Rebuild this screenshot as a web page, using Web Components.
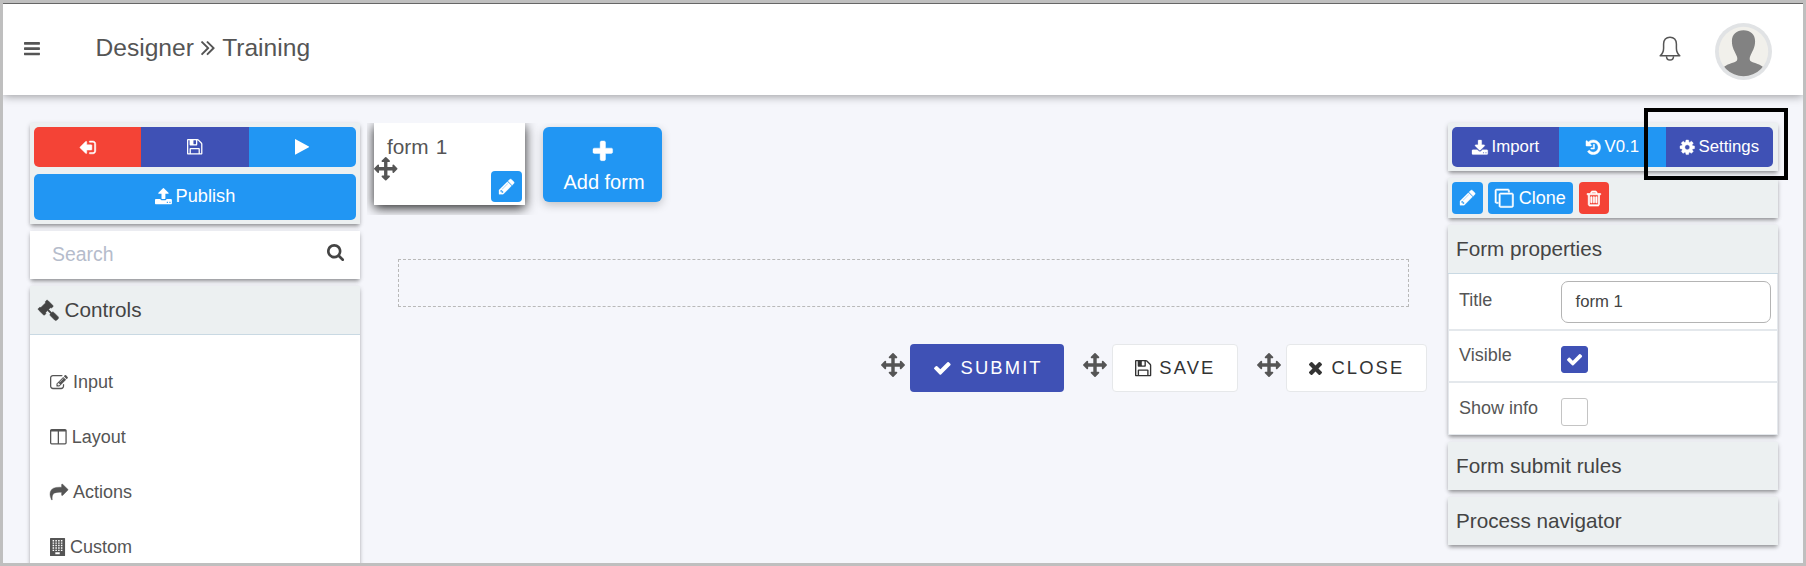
<!DOCTYPE html>
<html lang="en">
<head>
<meta charset="utf-8">
<title>Designer</title>
<style>
html,body{margin:0;height:100%;overflow:hidden}
body{font-family:"Liberation Sans",Arial,sans-serif;color:#555;background:#bfbfbf}
</style>
</head>
<body>
<designer-app></designer-app>
<script>
const ICONS={
bars:['128 256 1536 1280','M1664 1344v128q0 26-19 45t-45 19h-1408q-26 0-45-19t-19-45v-128q0-26 19-45t45-19h1408q26 0 45 19t19 45zm0-512v128q0 26-19 45t-45 19h-1408q-26 0-45-19t-19-45v-128q0-26 19-45t45-19h1408q26 0 45 19t19 45zm0-512v128q0 26-19 45t-45 19h-1408q-26 0-45-19t-19-45v-128q0-26 19-45t45-19h1408q26 0 45 19t19 45z'],
chevrons:['397 461 966 998','M979 960q0 13-10 23l-466 466q-10 10-23 10t-23-10l-50-50q-10-10-10-23t10-23l393-393-393-393q-10-10-10-23t10-23l50-50q10-10 23-10t23 10l466 466q10 10 10 23zm384 0q0 13-10 23l-466 466q-10 10-23 10t-23-10l-50-50q-10-10-10-23t10-23l393-393-393-393q-10-10-10-23t10-23l50-50q10-10 23-10t23 10l466 466q10 10 10 23z'],
exit:['64 256 1568 1280','M704 1440q0 4 1 20t.5 26.5-3 23.5-10 19.5-20.5 6.5h-320q-119 0-203.5-84.5t-84.5-203.5v-704q0-119 84.5-203.5t203.5-84.5h320q13 0 22.5 9.5t9.5 22.5q0 4 1 20t.5 26.5-3 23.5-10 19.5-20.5 6.5h-320q-66 0-113 47t-47 113v704q0 66 47 113t113 47h312l11.5 1 11.5 3 8 5.5 7 9 2 13.5zm928-544q0 26-19 45l-544 544q-19 19-45 19t-45-19-19-45v-288h-448q-26 0-45-19t-19-45v-384q0-26 19-45t45-19h448v-288q0-26 19-45t45-19 45 19l544 544q19 19 19 45z',50],
play:['192 114 1407 1564','M1576 927l-1328 738q-23 13-39.5 3t-16.5-36v-1472q0-26 16.5-36t39.5 3l1328 738q23 13 23 31t-23 31z'],
floppy:['128 128 1536 1536','M512 1536h768v-384h-768v384zm896 0h128v-896q0-14-10-38.5t-20-34.5l-281-281q-10-10-34-20t-39-10v416q0 40-28 68t-68 28h-576q-40 0-68-28t-28-68v-416h-128v1280h128v-416q0-40 28-68t68-28h832q40 0 68 28t28 68v416zm-384-928v-320q0-13-9.5-22.5t-22.5-9.5h-192q-13 0-22.5 9.5t-9.5 22.5v320q0 13 9.5 22.5t22.5 9.5h192q13 0 22.5-9.5t9.5-22.5zm640 32v928q0 40-28 68t-68 28h-1344q-40 0-68-28t-28-68v-1344q0-40 28-68t68-28h928q40 0 88 20t76 48l280 280q28 28 48 76t20 88z'],
upload:['64 64 1664 1600','M1344 1472q0-26-19-45t-45-19-45 19-19 45 19 45 45 19 45-19 19-45zm256 0q0-26-19-45t-45-19-45 19-19 45 19 45 45 19 45-19 19-45zm128-224v320q0 40-28 68t-68 28h-1472q-40 0-68-28t-28-68v-320q0-40 28-68t68-28h427q21 56 70.5 92t110.5 36h256q61 0 110.5-36t70.5-92h427q40 0 68 28t28 68zm-325-648q-17 40-59 40h-256v448q0 26-19 45t-45 19h-256q-26 0-45-19t-19-45v-448h-256q-42 0-59-40-17-39 14-69l448-448q18-19 45-19t45 19l448 448q31 30 14 69z'],
download:['64 0 1664 1536','M1344 1344q0-26-19-45t-45-19-45 19-19 45 19 45 45 19 45-19 19-45zm256 0q0-26-19-45t-45-19-45 19-19 45 19 45 45 19 45-19 19-45zm128-224v320q0 40-28 68t-68 28h-1472q-40 0-68-28t-28-68v-320q0-40 28-68t68-28h465l135 136q58 56 136 56t136-56l136-136h464q40 0 68 28t28 68zm-325-569q17 41-14 70l-448 448q-18 19-45 19t-45-19l-448-448q-31-29-14-70 17-39 59-39h256v-448q0-26 19-45t45-19h256q26 0 45 19t19 45v448h256q42 0 59 39z',30],
search:['64 128 1664 1664','M1216 832q0-185-131.5-316.5t-316.5-131.5-316.5 131.5-131.5 316.5 131.5 316.5 316.5 131.5 316.5-131.5 131.5-316.5zm512 832q0 52-38 90t-90 38q-54 0-90-38l-343-342q-179 124-399 124-143 0-273.5-55.5t-225-150-150-225-55.5-273.5 55.5-273.5 150-225 225-150 273.5-55.5 273.5 55.5 225 150 150 225 55.5 273.5q0 220-124 399l343 343q37 37 37 90z'],
gavel:['21 21 1750 1750','M1771 1536q0 53-37 90l-107 108q-39 37-91 37-53 0-90-37l-363-364q-38-36-38-90 0-53 43-96l-256-256-126 126q-14 14-34 14t-34-14q2 2 12.5 12t12.5 13 10 11.5 10 13.5 6 13.5 5.5 16.5 1.5 18q0 38-28 68-3 3-16.5 18t-19 20.5-18.5 16.5-22 15.5-22 9-26 4.5q-40 0-68-28l-408-408q-28-28-28-68 0-13 4.5-26t9-22 15.5-22 16.5-18.5 20.5-19 18-16.5q30-28 68-28 10 0 18 1.5t16.5 5.5 13.5 6 13.5 10 11.5 10 13 12.5 12 12.5q-14-14-14-34t14-34l348-348q14-14 34-14t34 14q-2-2-12.5-12t-12.5-13-10-11.5-10-13.5-6-13.5-5.5-16.5-1.5-18q0-38 28-68 3-3 16.5-18t19-20.5 18.5-16.5 22-15.5 22-9 26-4.5q40 0 68 28l408 408q28 28 28 68 0 13-4.5 26t-9 22-15.5 22-16.5 18.5-20.5 19-18 16.5q-30 28-68 28-10 0-18-1.5t-16.5-5.5-13.5-6-13.5-10-11.5-10-13-12.5-12-12.5q14 14 14 34t-14 34l-126 126 256 256q43-43 96-43 52 0 91 37l363 363q37 39 37 91z',50],
edit:['0 128 1792 1408','M888 1184l116-116-152-152-116 116v56h96v96h56zm440-720q-16-16-33 1l-350 350q-17 17-1 33t33-1l350-350q17-17 1-33zm80 594v190q0 119-84.5 203.5t-203.5 84.5h-832q-119 0-203.5-84.5t-84.5-203.5v-832q0-119 84.5-203.5t203.5-84.5h832q63 0 117 25 15 7 18 23 3 17-9 29l-49 49q-14 14-32 8-23-6-45-6h-832q-66 0-113 47t-47 113v832q0 66 47 113t113 47h832q66 0 113-47t47-113v-126q0-13 9-22l64-64q15-15 35-7t20 29zm-96-738l288 288-672 672h-288v-288zm444 132l-92 92-288-288 92-92q28-28 68-28t68 28l152 152q28 28 28 68t-28 68z'],
columns:['64 128 1664 1536','M224 1536h608v-1152h-640v1120q0 13 9.5 22.5t22.5 9.5zm1376-32v-1120h-640v1152h608q13 0 22.5-9.5t9.5-22.5zm128-1216v1216q0 66-47 113t-113 47h-1344q-66 0-113-47t-47-113v-1216q0-66 47-113t113-47h1344q66 0 113 47t47 113z'],
share:['0 64 1792 1536','M1792 640q0 26-19 45l-512 512q-19 19-45 19t-45-19-19-45v-256h-224q-98 0-175.5 6t-154 21.5-133 42.5-105.5 69.5-80 101-48.5 138.5-17.5 181q0 55 5 123 0 6 2.5 23.5t2.5 26.5q0 15-8.5 25t-23.5 10q-16 0-28-17-7-9-13-22t-13.5-30-10.5-24q-127-285-127-451 0-199 53-333 162-403 875-403h224v-256q0-26 19-45t45-19 45 19l512 512q19 19 19 45z',40],
building:['0 0 1500 1792','M60 0h1380q60 0 60 60v1672q0 60-60 60H60q-60 0-60-60V60Q0 0 60 0zM260 200v140h150V200zm275 0v140h150V200zm275 0v140h150V200zm275 0v140h150V200zM260 440v140h150V440zm275 0v140h150V440zm275 0v140h150V440zm275 0v140h150V440zM260 680v140h150V680zm275 0v140h150V680zm275 0v140h150V680zm275 0v140h150V680zM260 920v140h150V920zm275 0v140h150V920zm275 0v140h150V920zm275 0v140h150V920zM260 1160v140h150v-140zm275 0v140h150v-140zm275 0v140h150v-140zm275 0v140h150v-140zM530 1420v210h440v-210z'],
arrows:['0 0 1792 1792','M1792 896q0 26-19 45l-256 256q-19 19-45 19t-45-19-19-45v-128h-384v384h128q26 0 45 19t19 45-19 45l-256 256q-19 19-45 19t-45-19l-256-256q-19-19-19-45t19-45 45-19h128v-384h-384v128q0 26-19 45t-45 19-45-19l-256-256q-19-19-19-45t19-45l256-256q19-19 45-19t45 19 19 45v128h384v-384h-128q-26 0-45-19t-19-45 19-45l256-256q19-19 45-19t45 19l256 256q19 19 19 45t-19 45-45 19h-128v384h384v-128q0-26 19-45t45-19 45 19l256 256q19 19 19 45z'],
pencil:['128 149 1515 1515','M491 1536l91-91-235-235-91 91v107h128v128h107zm523-928q0-22-22-22-10 0-17 7l-542 542q-7 7-7 17 0 22 22 22 10 0 17-7l542-542q7-7 7-17zm-54-192l416 416-832 832h-416v-416zm683 96q0 53-37 90l-166 166-416-416 166-165q36-38 90-38 53 0 91 38l235 234q37 39 37 91z',30],
plus:['192 128 1408 1408','M1600 736v192q0 40-28 68t-68 28h-416v416q0 40-28 68t-68 28h-192q-40 0-68-28t-28-68v-416h-416q-40 0-68-28t-28-68v-192q0-40 28-68t68-28h416v-416q0-40 28-68t68-28h192q40 0 68 28t28 68v416h416q40 0 68 28t28 68z',30],
check:['121 334 1550 1188','M1671 566q0 40-28 68l-724 724-136 136q-28 28-68 28t-68-28l-136-136-362-362q-28-28-28-68t28-68l136-136q28-28 68-28t68 28l294 295 656-657q28-28 68-28t68 28l136 136q28 28 28 68z'],
times:['302 366 1188 1188','M1490 1322q0 40-28 68l-136 136q-28 28-68 28t-68-28l-294-294-294 294q-28 28-68 28t-68-28l-136-136q-28-28-28-68t28-68l294-294-294-294q-28-28-28-68t28-68l136-136q28-28 68-28t68 28l294 294 294-294q28-28 68-28t68 28l136 136q28 28 28 68t-28 68l-294 294 294 294q28 28 28 68z'],
history:['128 128 1536 1536','M1664 896q0 156-61 298t-164 245-245 164-298 61q-172 0-327-72.5t-264-204.5q-7-10-6.5-22.5t8.5-20.5l137-138q10-9 25-9 16 2 23 12 73 95 179 147t225 52q104 0 198.5-40.5t163.5-109.5 109.5-163.5 40.5-198.5-40.5-198.5-109.5-163.5-163.5-109.5-198.5-40.5q-98 0-188 35.5t-160 101.5l137 138q31 30 14 69-17 40-59 40h-448q-26 0-45-19t-19-45v-448q0-42 40-59 39-17 69 14l130 129q107-101 244.5-156.5t284.5-55.5q156 0 298 61t245 164 164 245 61 298zm-640-288v448q0 14-9 23t-23 9h-320q-14 0-23-9t-9-23v-64q0-14 9-23t23-9h224v-352q0-14 9-23t23-9h64q14 0 23 9t9 23z',50],
cog:['128 128 1536 1536','M1152 896q0-106-75-181t-181-75-181 75-75 181 75 181 181 75 181-75 75-181zm512-109v222q0 12-8 23t-20 13l-185 28q-19 54-39 91 35 50 107 138 10 12 10 25t-9 23q-27 37-99 108t-94 71q-12 0-26-9l-138-108q-44 23-91 38-16 136-29 186-7 28-36 28h-222q-14 0-24.5-8.5t-11.5-21.5l-28-184q-49-16-90-37l-141 107q-10 9-25 9-14 0-25-11-126-114-165-168-7-10-7-23 0-12 8-23 15-21 51-66.5t54-70.5q-27-50-41-99l-183-27q-13-2-21-12.5t-8-23.5v-222q0-12 8-23t19-13l186-28q14-46 39-92-40-57-107-138-10-12-10-24 0-10 9-23 26-36 98.5-107.5t94.5-71.5q13 0 26 10l138 107q44-23 91-38 16-136 29-186 7-28 36-28h222q14 0 24.5 8.5t11.5 21.5l28 184q49 16 90 37l142-107q9-9 24-9 13 0 25 10 129 119 165 170 7 8 7 22 0 12-8 23-15 21-51 66.5t-54 70.5q26 50 41 98l183 28q13 2 21 12.5t8 23.5z',40],
trash:['192 128 1408 1536','M704 736v576q0 14-9 23t-23 9h-64q-14 0-23-9t-9-23v-576q0-14 9-23t23-9h64q14 0 23 9t9 23zm256 0v576q0 14-9 23t-23 9h-64q-14 0-23-9t-9-23v-576q0-14 9-23t23-9h64q14 0 23 9t9 23zm256 0v576q0 14-9 23t-23 9h-64q-14 0-23-9t-9-23v-576q0-14 9-23t23-9h64q14 0 23 9t9 23zm128 724v-948h-896v948q0 22 7 40.5t14.5 27 10.5 8.5h832q3 0 10.5-8.5t14.5-27 7-40.5zm-672-1076h448l-48-117q-7-9-17-11h-317q-10 2-17 11zm928 32v64q0 14-9 23t-23 9h-96v948q0 83-47 143.5t-113 60.5h-832q-66 0-113-58.5t-47-141.5v-952h-96q-14 0-23-9t-9-23v-64q0-14 9-23t23-9h309l70-167q15-37 54-63t79-26h320q40 0 79 26t54 63l70 167h309q14 0 23 9t9 23z',70],
clone:['0 0 1792 1792','M1664 1632v-1088q0-13-9.5-22.5t-22.5-9.5h-1088q-13 0-22.5 9.5t-9.5 22.5v1088q0 13 9.5 22.5t22.5 9.5h1088q13 0 22.5-9.5t9.5-22.5zm128-1088v1088q0 66-47 113t-113 47h-1088q-66 0-113-47t-47-113v-1088q0-66 47-113t113-47h1088q66 0 113 47t47 113zm-384-384v160h-128v-160q0-13-9.5-22.5t-22.5-9.5h-1088q-13 0-22.5 9.5t-9.5 22.5v1088q0 13 9.5 22.5t22.5 9.5h160v128h-160q-66 0-113-47t-47-113v-1088q0-66 47-113t113-47h1088q66 0 113 47t47 113z',50]
};

function define(name,html){
  customElements.define(name,class extends HTMLElement{
    constructor(){super();this.attachShadow({mode:'open'});}
    connectedCallback(){
      this.shadowRoot.innerHTML=typeof html==='function'?html(this):html;
    }
  });
}

/* size is the em of the icon font; the box hugs the visible glyph */
define('ui-icon',el=>{
  const [vb,d,weight=0]=ICONS[el.getAttribute('name')];
  const f=+(el.getAttribute('size')||18)/1792,[,,w,h]=vb.split(' ');
  return `<style>:host{display:block;flex:none;width:${(w*f).toFixed(2)}px;height:${(h*f).toFixed(2)}px}svg{display:block;width:100%;height:100%;overflow:visible}</style><svg viewBox="${vb}" fill="currentColor" stroke="currentColor" stroke-width="${weight}" fill-rule="${el.getAttribute('name')==='building'?'evenodd':'nonzero'}" aria-hidden="true"><path d="${d}"/></svg>`;
});

define('ui-button',`<style>
:host{display:flex;align-items:center;justify-content:center;box-sizing:border-box;color:#fff;background:#2196f3;border-radius:4px;font-size:18px;gap:4px;white-space:nowrap}
:host([tone=danger]){background:#f44336}
:host([tone=primary]){background:#3f51b5}
:host([tone=plain]){background:#fff;color:#333;border:1px solid #e6e8ea}
</style><slot></slot>`);

define('button-group',`<style>
:host{display:flex;height:40px;border-radius:5px}
::slotted(ui-button){flex:1;border-radius:0;font-size:16.8px}
::slotted(ui-button:first-child){border-radius:5px 0 0 5px}
::slotted(ui-button:last-child){border-radius:0 5px 5px 0}
</style><slot></slot>`);

define('ui-card',`<style>
:host{display:block;background:#ecf0f1;box-shadow:0 3px 4px -1px rgba(0,0,0,.36),0 1px 5px rgba(0,0,0,.12)}
:host([white]){background:#fff}
:host([tools]){padding:4px}
</style><slot></slot>`);

define('card-title',`<style>
:host{display:flex;align-items:center;gap:6px;height:48px;padding-left:8px;font-size:20.7px;color:#444;box-sizing:border-box;background:#ecf0f1}
:host([lined]){height:49px;border-bottom:1px solid #c9d9e3}
</style><slot></slot>`);

define('control-item',el=>`<style>
:host{display:flex;align-items:center;gap:5px;height:55px;padding-left:20px;font-size:18px}
ui-icon{margin-bottom:1px}
</style><ui-icon name="${el.getAttribute('icon')}" size="18"></ui-icon><slot></slot>`);

define('property-row',el=>`<style>
:host{display:flex;height:50px;border-bottom:2px solid #e4e8ec;font-size:18px}
:host([tall]){height:54px}
:host(:last-child){border-bottom:0;height:51px}
.l{width:102px;box-sizing:border-box;padding-left:10px;line-height:21px;padding-top:${el.getAttribute('top')}px}
.v{margin-left:10px;padding-top:${el.getAttribute('vtop')}px}
</style><div class="l">${el.getAttribute('label')}</div><div class="v"><slot></slot></div>`);

define('text-field',`<style>
:host{display:block;box-sizing:border-box;width:210px;height:42px;border:1px solid #b4b4b4;border-radius:7px;padding-left:13.5px;line-height:39px;font-size:16.7px;color:#444}
</style><slot></slot>`);

define('check-box',el=>`<style>
:host{display:flex;align-items:center;justify-content:center;box-sizing:border-box;width:27px;height:28px;border:1px solid #c4c4c4;border-radius:3px;color:#fff}
:host([checked]){height:27px;background:#3f51b5;border-color:#3f51b5}
</style>${el.hasAttribute('checked')?'<ui-icon name="check" size="17.5"></ui-icon>':''}`);

define('app-header',`<style>
:host{display:flex;box-sizing:border-box;height:92px;border-top:1px solid #666;background:#fff;align-items:center;position:relative;box-shadow:0 1px 9px rgba(0,0,0,.4);padding:0 31px 0 21px}
.title{display:flex;align-items:center;font-size:24.6px;margin:-4px 0 0 55.5px;flex:1;line-height:30px}
.title ui-icon{margin:2px 7.5px 0 7px}
.menu{margin-top:-2px}
.bell{width:22px;height:27px;margin:-3px 34px 0 0}
.avatar{width:57px;height:57px;margin-top:3px}
svg{display:block}
</style>
<ui-icon class="menu" name="bars" size="18.6"></ui-icon>
<div class="title"><span>Designer</span><ui-icon name="chevrons" size="25.5"></ui-icon><span>Training</span></div>
<svg class="bell" viewBox="0 0 22 27" fill="none" stroke="#555" stroke-width="1.5" stroke-linejoin="round"><path d="M11 2.2C7 2.2 4.6 5 4.6 9v4.2c0 3.4-.8 5.2-3.4 7.6h19.600c-2.600-2.400-3.400-4.200-3.400-7.600V9c0-4-2.400-6.800-6.400-6.800z"/><path d="M7.500 21.200c0 2.400 1.400 3.900 3.500 3.900s3.500-1.500 3.500-3.900"/></svg>
<svg class="avatar" viewBox="0 0 57 57"><defs><clipPath id="c"><circle cx="28.500" cy="28.500" r="24.700"/></clipPath></defs><circle cx="28.500" cy="28.500" r="28.500" fill="#e1e3e5"/><circle cx="28.500" cy="28.500" r="24.700" fill="#f1f0eb"/><g clip-path="url(#c)"><path fill="#828282" d="M28.500 7.300c-7 0-11.600 4.300-11.600 10.700 0 7 2.900 10.300 4.900 15.200.8 2.100.8 4.300-1 5.400C17 40.600 12 40.800 8 45v12h41V45c-4-4.200-9-4.400-12.800-6.400-1.800-1.100-1.800-3.300-1-5.400 2-4.900 4.900-8.200 4.900-15.200 0-6.400-4.600-10.700-11.600-10.700z"/></g><path d="M14 49.300a24.700 24.700 0 0 0 29 0l1.500 2a28 28 0 0 1-32 0z" fill="#e1e3e5"/></svg>`);

define('form-tile',`<style>
:host{display:block;position:relative;box-sizing:border-box;width:151px;height:82px;background:#fff;box-shadow:0 3px 11px rgba(0,0,0,.85);padding:12px 0 0 13px;font-size:20.8px;line-height:24px;word-spacing:1.5px}
.move{position:absolute;left:0;top:34px}
ui-button{position:absolute;right:3px;bottom:3px;width:31px;height:31px}
</style><slot></slot><ui-icon class="move" name="arrows" size="23.5"></ui-icon><ui-button><ui-icon name="pencil" size="18"></ui-icon></ui-button>`);

define('action-bar',`<style>
:host{display:flex;justify-content:flex-end;height:48px}
.m{color:#555;margin:9px 5px 0 0}
ui-button{height:48px;font-size:18.4px;letter-spacing:2.1px;gap:8px;justify-content:flex-start;padding-left:24px;margin-right:19px}
ui-button[tone=plain]{padding-left:22px}
ui-button:last-child{margin-right:0}
</style>
<ui-icon class="m" name="arrows" size="24"></ui-icon><ui-button tone="primary" style="width:154px;gap:10px"><ui-icon name="check" size="19.200"></ui-icon><span>SUBMIT</span></ui-button>
<ui-icon class="m" name="arrows" size="24"></ui-icon><ui-button tone="plain" style="width:126px"><ui-icon name="floppy" size="19"></ui-icon><span>SAVE</span></ui-button>
<ui-icon class="m" name="arrows" size="24"></ui-icon><ui-button tone="plain" style="width:141px;gap:9.500px"><ui-icon name="times" size="19.600"></ui-icon><span>CLOSE</span></ui-button>`);

define('left-sidebar',`<style>
:host{display:flex;flex-direction:column;gap:7px;width:330px;flex:none}
.publish{height:46px;margin-top:7px;font-size:18.200px;gap:4px;padding-bottom:2px;border-radius:5px}
.flip{transform:rotate(180deg)}
.search{display:flex;height:48px;align-items:center;justify-content:space-between;padding:0 15.5px 0 22px;font-size:19.400px;color:#b5bccb}
.search span{margin-bottom:1px}
.search ui-icon{color:#444;margin-bottom:4px}
.list{padding-top:20px}
</style>
<ui-card tools><button-group><ui-button tone="danger"><ui-icon class="flip" name="exit" size="18"></ui-icon></ui-button><ui-button tone="primary"><ui-icon name="floppy" size="18"></ui-icon></ui-button><ui-button><ui-icon name="play" size="18"></ui-icon></ui-button></button-group>
<ui-button class="publish"><ui-icon name="upload" size="18.2"></ui-icon><span>Publish</span></ui-button></ui-card>
<ui-card white><div class="search"><span>Search</span><ui-icon name="search" size="18.4"></ui-icon></div></ui-card>
<ui-card white><card-title lined><ui-icon name="gavel" size="21"></ui-icon><span>Controls</span></card-title>
<div class="list"><control-item icon="edit">Input</control-item><control-item icon="columns">Layout</control-item><control-item icon="share">Actions</control-item><control-item icon="building">Custom</control-item></div></ui-card>`);

define('form-canvas',`<style>
:host{display:block;width:1060px;flex:none;margin-left:7px}
.strip{display:flex;height:92px;overflow:hidden;padding-left:7px;gap:18px}
.add{flex-direction:column;width:119px;height:75px;margin-top:4px;border-radius:6px;font-size:20px;gap:9px;box-shadow:0 3px 10px rgba(0,0,0,.22);line-height:24px;padding:6px 0 0 0}
.add span{padding-left:3px}
.drop{box-sizing:border-box;width:1011px;height:48px;margin:44px 0 0 31px;border:1px dashed #b9b9b9}
action-bar{margin-top:37px}
</style>
<div class="strip"><form-tile>form 1</form-tile><ui-button class="add"><ui-icon name="plus" size="25"></ui-icon><span>Add form</span></ui-button></div>
<div class="drop"></div>
<action-bar></action-bar>`);

define('right-sidebar',`<style>
:host{display:flex;flex-direction:column;gap:7px;width:330px;flex:none;margin-left:21px}
.top{position:relative;z-index:1}
.top button-group{width:321px}
.focus{position:absolute;left:196px;top:-15px;width:144px;height:72px;box-sizing:border-box;border:4px solid #000}
.tools{display:flex;height:32px;gap:5px}
.sq{width:31px}
.tools [tone=danger]{width:30px;margin-left:1px}
.body{border:1px solid #e4e8ec;border-top:0;padding-top:1px}
</style>
<ui-card tools class="top"><button-group><ui-button tone="primary"><ui-icon name="download" size="17"></ui-icon><span>Import</span></ui-button><ui-button><ui-icon name="history" size="17"></ui-icon><span>V0.1</span></ui-button><ui-button tone="primary"><ui-icon name="cog" size="17"></ui-icon><span>Settings</span></ui-button></button-group><div class="focus"></div></ui-card>
<ui-card tools><div class="tools"><ui-button class="sq"><ui-icon name="pencil" size="18"></ui-icon></ui-button><ui-button style="width:85px;gap:5px"><ui-icon name="clone" size="18.500"></ui-icon><span>Clone</span></ui-button><ui-button tone="danger"><ui-icon name="trash" size="17.5"></ui-icon></ui-button></div></ui-card>
<ui-card white><card-title lined>Form properties</card-title><div class="body">
<property-row tall label="Title" top="15" vtop="6"><text-field>form 1</text-field></property-row>
<property-row label="Visible" top="14" vtop="15"><check-box checked></check-box></property-row>
<property-row label="Show info" top="15" vtop="15"><check-box></check-box></property-row></div></ui-card>
<ui-card><card-title>Form submit rules</card-title></ui-card>
<ui-card><card-title>Process navigator</card-title></ui-card>`);

define('designer-app',`<style>
:host{display:block;box-sizing:border-box;width:1806px;height:566px;border:3px solid #bfbfbf;background:#f5f6fb;overflow:hidden}
main{display:flex;align-items:flex-start;padding:28px 0 0 27px}
</style><app-header></app-header><main><left-sidebar></left-sidebar><form-canvas></form-canvas><right-sidebar></right-sidebar></main>`);
</script>
</body>
</html>
